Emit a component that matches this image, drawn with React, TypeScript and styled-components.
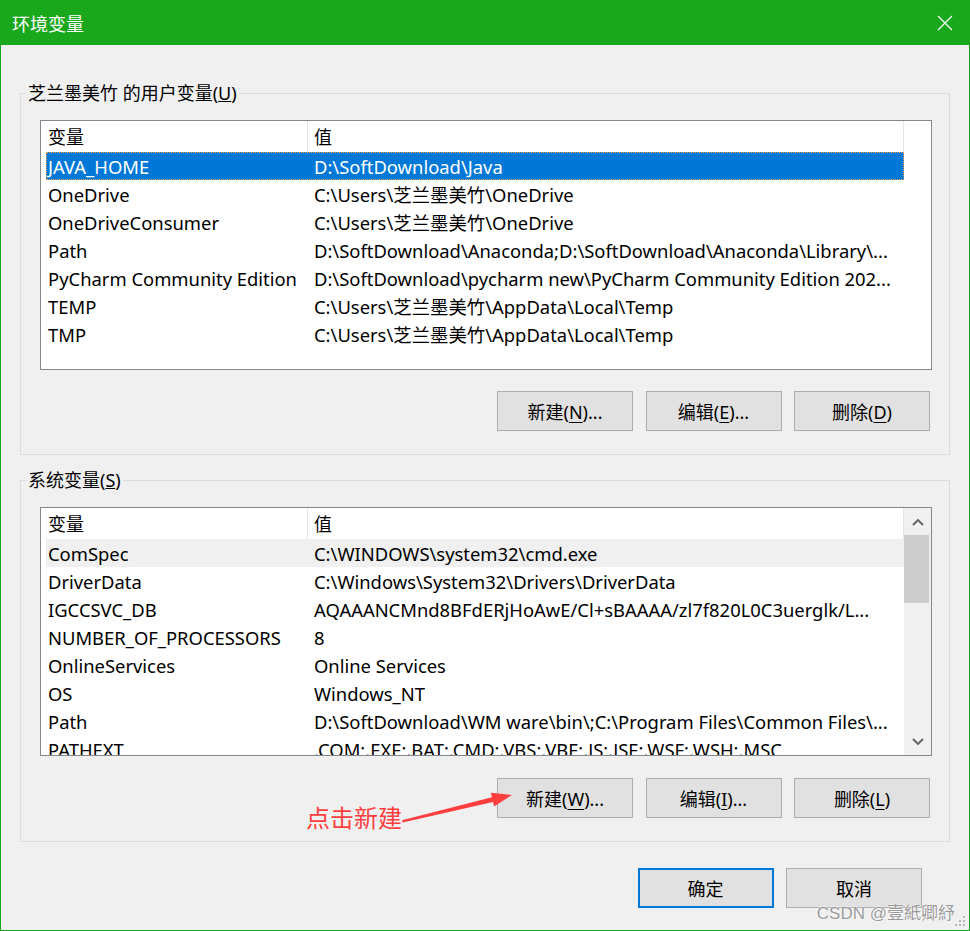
import React from 'react'
import styled, { createGlobalStyle } from 'styled-components'

const uiFont = `"Noto Sans", "Noto Sans CJK SC", sans-serif`

const GlobalStyle = createGlobalStyle`
  html, body {
    margin: 0;
    padding: 0;
    background: #f0f0f0;
  }
  * {
    box-sizing: border-box;
  }
`

const Window = styled.div`
  position: relative;
  width: 970px;
  height: 931px;
  display: flex;
  flex-direction: column;
  background: #f0f0f0;
  border: 1px solid #19a81b;
  border-top: none;
  font-family: ${uiFont};
  font-size: 18px;
  color: #000;
  overflow: hidden;
`

const TitleBar = styled.div`
  height: 45px;
  flex: 0 0 45px;
  display: flex;
  align-items: center;
  justify-content: space-between;
  padding: 0 16px 0 11px;
  background: #19a81b;
  color: #fff;
  font-size: 18px;
`

const Content = styled.div`
  padding: 36px 19px 0 19px;
  display: flex;
  flex-direction: column;
`

const GroupBox = styled.fieldset`
  margin: 0;
  min-width: 0;
  border: 1px solid #dcdcdc;
  padding: 15px 17px 23px 19px;
  & + & {
    margin-top: 13px;
  }
`

const Legend = styled.legend`
  padding: 0 2px;
  margin-left: -14px;
  line-height: 24px;
  font-size: 18px;
  color: #000;
`

const ListView = styled.div<{ $height: number }>`
  height: ${p => p.$height}px;
  display: flex;
  border: 1px solid #828790;
  background: #fff;
  overflow: hidden;
`

const ListBody = styled.div`
  flex: 0 0 863px;
  display: flex;
  flex-direction: column;
  overflow: hidden;
`

const Header = styled.div`
  height: 31px;
  flex: 0 0 31px;
  display: flex;
  align-items: center;
`

const HeaderCell = styled.div<{ $width: number; $pad: number }>`
  width: ${p => p.$width}px;
  height: 100%;
  display: flex;
  align-items: center;
  padding-left: ${p => p.$pad}px;
  border-right: 1px solid #e5e5e5;
  line-height: 1;
`

const Rows = styled.div`
  padding-left: 5px;
`

const Row = styled.div<{ $state?: 'selected' | 'focus' }>`
  height: 28px;
  display: flex;
  align-items: center;
  white-space: nowrap;
  font-size: 18.4px;
  background: ${p => (p.$state === 'selected' ? '#0078d7' : p.$state === 'focus' ? '#f0f0f0' : 'transparent')};
  color: ${p => (p.$state === 'selected' ? '#fff' : '#000')};
  outline: ${p => (p.$state === 'selected' ? '1px dotted #e9a15a' : 'none')};
  outline-offset: -1px;
`

const NameCell = styled.div`
  width: 262px;
  flex: 0 0 262px;
  padding-left: 2px;
  overflow: hidden;
`

const ValueCell = styled.div`
  flex: 1;
  padding-left: 6px;
  overflow: hidden;
`

const Scrollbar = styled.div`
  flex: 1;
  display: flex;
  flex-direction: column;
  background: #f0f0f0;
`

const ScrollArrow = styled.div`
  height: 27px;
  flex: 0 0 27px;
  display: flex;
  align-items: center;
  justify-content: center;
`

const ScrollThumb = styled.div`
  height: 68px;
  margin: 0 2px 0 0;
  background: #cdcdcd;
`

const ScrollTrack = styled.div`
  flex: 1;
`

const ButtonRow = styled.div<{ $top: number; $right?: number }>`
  display: flex;
  justify-content: flex-end;
  gap: 12.5px;
  margin-top: ${p => p.$top}px;
  margin-right: ${p => p.$right ?? 0}px;
`

const Button = styled.button<{ $primary?: boolean }>`
  width: 136px;
  height: 40px;
  padding: 0;
  background: #e1e1e1;
  border: ${p => (p.$primary ? '2px solid #0078d7' : '1px solid #adadad')};
  font-family: ${uiFont};
  font-size: 18px;
  color: #000;
  u {
    text-underline-offset: 3px;
  }
`

const Annotation = styled.div`
  position: absolute;
  left: 305px;
  top: 802px;
  font-family: "Noto Sans CJK SC", sans-serif;
  font-size: 24px;
  line-height: 30px;
  color: #ff3f3f;
`

const ArrowDrawing = styled.svg`
  position: absolute;
  left: 390px;
  top: 780px;
`

const Watermark = styled.div`
  position: absolute;
  right: 14px;
  bottom: 6px;
  font-family: "Liberation Sans", "Noto Sans CJK SC", sans-serif;
  font-size: 17px;
  color: #9a9a9a;
  text-shadow: 0 0 2px #fff, 0 0 1px #fff;
`

const Grip = styled.svg`
  position: absolute;
  right: 3px;
  bottom: 3px;
`

type Variable = { name: string; value: string; state?: 'selected' | 'focus' }

const userVars: Variable[] = [
  { name: 'JAVA_HOME', value: 'D:\\SoftDownload\\Java', state: 'selected' },
  { name: 'OneDrive', value: 'C:\\Users\\芝兰墨美竹\\OneDrive' },
  { name: 'OneDriveConsumer', value: 'C:\\Users\\芝兰墨美竹\\OneDrive' },
  { name: 'Path', value: 'D:\\SoftDownload\\Anaconda;D:\\SoftDownload\\Anaconda\\Library\\...' },
  { name: 'PyCharm Community Edition', value: 'D:\\SoftDownload\\pycharm new\\PyCharm Community Edition 202...' },
  { name: 'TEMP', value: 'C:\\Users\\芝兰墨美竹\\AppData\\Local\\Temp' },
  { name: 'TMP', value: 'C:\\Users\\芝兰墨美竹\\AppData\\Local\\Temp' },
]

const systemVars: Variable[] = [
  { name: 'ComSpec', value: 'C:\\WINDOWS\\system32\\cmd.exe', state: 'focus' },
  { name: 'DriverData', value: 'C:\\Windows\\System32\\Drivers\\DriverData' },
  { name: 'IGCCSVC_DB', value: 'AQAAANCMnd8BFdERjHoAwE/Cl+sBAAAA/zl7f820L0C3uerglk/L...' },
  { name: 'NUMBER_OF_PROCESSORS', value: '8' },
  { name: 'OnlineServices', value: 'Online Services' },
  { name: 'OS', value: 'Windows_NT' },
  { name: 'Path', value: 'D:\\SoftDownload\\WM ware\\bin\\;C:\\Program Files\\Common Files\\...' },
  { name: 'PATHEXT', value: '.COM;.EXE;.BAT;.CMD;.VBS;.VBE;.JS;.JSE;.WSF;.WSH;.MSC' },
]

const CloseIcon = () => (
  <svg width="16" height="16" viewBox="0 0 16 16">
    <path d="M1 1L15 15M15 1L1 15" stroke="#fff" strokeWidth="1.2" fill="none" />
  </svg>
)

const Chevron = ({ up }: { up?: boolean }) => (
  <svg width="12" height="8" viewBox="0 0 12 8">
    <path
      d={up ? 'M1 7L6 2L11 7' : 'M1 1L6 6L11 1'}
      stroke="#606060"
      strokeWidth="1.8"
      fill="none"
    />
  </svg>
)

function VariableList({ items, height, scroll }: { items: Variable[]; height: number; scroll?: boolean }) {
  return (
    <ListView $height={height}>
      <ListBody>
        <Header>
          <HeaderCell $width={267} $pad={7}>变量</HeaderCell>
          <HeaderCell $width={596} $pad={6}>值</HeaderCell>
        </Header>
        <Rows>
          {items.map(item => (
            <Row key={item.name + item.value} $state={item.state}>
              <NameCell>{item.name}</NameCell>
              <ValueCell>{item.value}</ValueCell>
            </Row>
          ))}
        </Rows>
      </ListBody>
      {scroll && (
        <Scrollbar>
          <ScrollArrow>
            <Chevron up />
          </ScrollArrow>
          <ScrollThumb />
          <ScrollTrack />
          <ScrollArrow>
            <Chevron />
          </ScrollArrow>
        </Scrollbar>
      )}
    </ListView>
  )
}

export default function App() {
  return (
    <>
      <GlobalStyle />
      <Window>
        <TitleBar>
          <span>环境变量</span>
          <CloseIcon />
        </TitleBar>
        <Content>
          <GroupBox>
            <Legend>
              芝兰墨美竹 的用户变量(<u>U</u>)
            </Legend>
            <VariableList items={userVars} height={250} />
            <ButtonRow $top={21} $right={2}>
              <Button>新建(<u>N</u>)...</Button>
              <Button>编辑(<u>E</u>)...</Button>
              <Button>删除(<u>D</u>)</Button>
            </ButtonRow>
          </GroupBox>
          <GroupBox>
            <Legend>
              系统变量(<u>S</u>)
            </Legend>
            <VariableList items={systemVars} height={249} scroll />
            <ButtonRow $top={22} $right={2}>
              <Button>新建(<u>W</u>)...</Button>
              <Button>编辑(<u>I</u>)...</Button>
              <Button>删除(<u>L</u>)</Button>
            </ButtonRow>
          </GroupBox>
          <ButtonRow $top={26} $right={28}>
            <Button $primary>确定</Button>
            <Button>取消</Button>
          </ButtonRow>
        </Content>

        <Annotation>点击新建</Annotation>
        <ArrowDrawing width="130" height="50" viewBox="390 780 130 50">
          <polygon
            points="401,820.2 490.9,797.2 489.9,792.8 511,795 493.1,806.4 492.1,802 401.6,822.4"
            fill="#ff3f3f"
          />
        </ArrowDrawing>
        <Watermark>CSDN @壹紙卿紓</Watermark>
        <Grip width="12" height="12" viewBox="0 0 12 12">
          <g fill="#b8b8b8">
            <rect x="9" y="1" width="2" height="2" />
            <rect x="5" y="5" width="2" height="2" />
            <rect x="9" y="5" width="2" height="2" />
            <rect x="1" y="9" width="2" height="2" />
            <rect x="5" y="9" width="2" height="2" />
            <rect x="9" y="9" width="2" height="2" />
          </g>
        </Grip>
      </Window>
    </>
  )
}
